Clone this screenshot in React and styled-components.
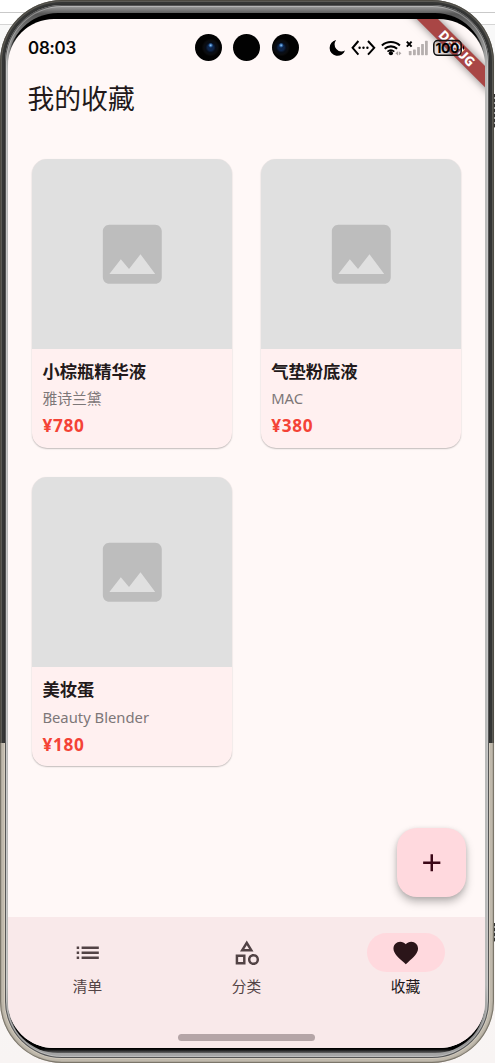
import React from "react";
import styled, { createGlobalStyle, css } from "styled-components";
import { MdAdd, MdFavorite, MdImage, MdList, MdOutlineCategory } from "react-icons/md";

const products = [
  { id: 1, name: "小棕瓶精华液", brand: "雅诗兰黛", price: 780 },
  { id: 2, name: "气垫粉底液", brand: "MAC", price: 380 },
  { id: 3, name: "美妆蛋", brand: "Beauty Blender", price: 180 },
];

const tabs = [
  { label: "清单", icon: MdList },
  { label: "分类", icon: MdOutlineCategory },
  { label: "收藏", icon: MdFavorite, active: true },
];

const StatusIcons = () => {
  return (
    <StatusSvg width="140" height="20" viewBox="0 0 140 20">
      {/* do not disturb */}
      <path d="M7.2 2.1A7.9 7.9 0 1 0 16 12.4 6.9 6.9 0 0 1 7.2 2.1z" fill="#000" />
      {/* usb debugging */}
      <g fill="none" stroke="#000" strokeWidth="2">
        <path d="M29.4 3 23.6 9.8l5.8 6.8M39 3l6.2 6.8-6.2 6.8" />
      </g>
      <g fill="#000">
        <circle cx="30.6" cy="9.8" r="1.2" />
        <circle cx="34.5" cy="9.8" r="1.2" />
        <circle cx="38.4" cy="9.8" r="1.2" />
      </g>
      {/* wifi */}
      <g fill="none" stroke="#000" strokeWidth="2.1">
        <path d="M52.9 7.5a13.4 13.4 0 0 1 18 0" />
        <path d="M55.7 10.8a9.2 9.2 0 0 1 12.4 0" />
        <path d="M58.5 13.6a5.2 5.2 0 0 1 6.8 0" strokeWidth="1.7" />
      </g>
      <circle cx="61.9" cy="15.2" r="2.1" fill="#000" />
      <path d="m69 13.2-2.6 2.1 2.6 2.1zM69.8 13.2l2.6 2.1-2.6 2.1z" fill="#aaa3a2" />
      {/* signal */}
      <path d="m77.8 3.6 4.8 5M82.6 3.6l-4.8 5" stroke="#000" strokeWidth="2" />
      <g fill="#b6afae">
        <rect x="79.8" y="13" width="2.8" height="4.2" rx="0.6" />
        <rect x="84" y="11.5" width="2.8" height="5.7" rx="0.6" />
        <rect x="88.1" y="9" width="2.8" height="8.2" rx="0.6" />
        <rect x="92.1" y="6" width="2.8" height="11.2" rx="0.6" />
        <rect x="96" y="2.8" width="2.8" height="14.4" rx="0.6" />
      </g>
      {/* battery */}
      <rect x="104.8" y="2.5" width="27.4" height="14.8" rx="4" fill="rgba(60, 40, 40, 0.12)" stroke="#111" strokeWidth="1.5" />
      <path d="M134 7.4q2.4 2.4 0 4.8z" fill="#000" />
      <text x="118.4" y="14.8" textAnchor="middle" fontSize="13.8" fontWeight="700" fontFamily="Inter, sans-serif" textLength="24">
        100
      </text>
    </StatusSvg>
  );
};

const ProductCard = ({ name, brand, price }) => {
  return (
    <Card>
      <Thumb>
        <MdImage />
      </Thumb>
      <CardBody>
        <h3>{name}</h3>
        <Brand>{brand}</Brand>
        <Price>¥{price}</Price>
      </CardBody>
    </Card>
  );
};

const App = () => {
  return (
    <>
      <GlobalStyle />
      <Desktop>
        <Speck $top={94} $height={34} />
        <Speck $top={923} $height={19} />
        <Shell>
          <Bevel>
            <Bezel>
              <Screen>
                <DebugBanner>DEBUG</DebugBanner>
                <StatusBar>
                  <Clock>08:03</Clock>
                  <Cameras>
                    <Lens $glow="58%" />
                    <Lens />
                    <Lens $glow="34%" />
                  </Cameras>
                  <StatusIcons />
                </StatusBar>
                <AppBar>我的收藏</AppBar>
                <Grid>
                  {products.map((product) => (
                    <ProductCard key={product.id} {...product} />
                  ))}
                </Grid>
                <Fab type="button" aria-label="add">
                  <MdAdd />
                </Fab>
                <NavBar>
                  <Tabs>
                    {tabs.map(({ label, icon: Icon, active }) => (
                      <Tab key={label} $active={active}>
                        <Indicator $active={active}>
                          <Icon />
                        </Indicator>
                        {label}
                      </Tab>
                    ))}
                  </Tabs>
                  <HomeHandle />
                </NavBar>
              </Screen>
            </Bezel>
          </Bevel>
        </Shell>
      </Desktop>
    </>
  );
};

const GlobalStyle = createGlobalStyle`
  * {
    box-sizing: border-box;
  }

  body {
    margin: 0;
    overflow: hidden;
    font-family: "Noto Sans", "Noto Sans CJK SC", sans-serif;
  }
`;

const Desktop = styled.div`
  position: relative;
  width: 495px;
  height: 1063px;
  background: linear-gradient(#fff 12px, #c9c9c9 12px 13px, #fff 13px 24px, #d5d5d5 24px 25px, #f8f8f8 25px 700px, #f8f4f3 1063px);
`;

const Speck = styled.i`
  position: absolute;
  right: 0;
  top: ${({ $top }) => $top}px;
  width: 2px;
  height: ${({ $height }) => $height}px;
  background: repeating-linear-gradient(#333 0 3px, #aaa 3px 5px);
`;

const Shell = styled.div`
  position: relative;
  width: 494px;
  height: 1063px;
  padding: 5px;
  border-radius: 62px;
  background: linear-gradient(#303131 743px, #d3cbbd 743px);
  box-shadow: inset 0 0 0 1px rgba(60, 55, 45, 0.45), inset 0 0 0 2px rgba(150, 145, 135, 0.4), inset 0 0 0 4px rgba(90, 88, 80, 0.15);
`;

const Bevel = styled.div`
  height: 100%;
  padding: 8px 4px 5px 3px;
  border-radius: 57px;
  background: linear-gradient(#aaa 0, #555 9px, #777 25px, #b9bab9 65px, #b9bab9 980px, #888 1030px, #aaa 1053px);
  box-shadow: inset 0 0 0 1px #555, inset 0 0 0 2px rgba(220, 220, 220, 0.4);
`;

const Bezel = styled.div`
  height: 100%;
  padding: 6px 0;
  border-radius: 50px;
  background: linear-gradient(#000 22px, #b9bab9 48px, #b9bab9 994px, #000 1018px, #000 1036px, #666 1040px);
`;

const Screen = styled.div`
  position: relative;
  display: flex;
  flex-direction: column;
  width: 477px;
  height: 1029px;
  border-radius: 46px;
  background: #fff8f7;
  overflow: hidden;
`;

const DebugBanner = styled.div`
  position: absolute;
  top: 21.5px;
  right: -32px;
  width: 120px;
  height: 14.6px;
  line-height: 15px;
  transform: rotate(45deg);
  background: #a94645;
  color: #fff;
  font-size: 13px;
  font-weight: 800;
  text-align: center;
  box-shadow: 0 0 8px rgba(0, 0, 0, 0.5);
`;

const StatusBar = styled.div`
  position: relative;
  display: flex;
  align-items: center;
  height: 57px;
  padding-left: 20px;
`;

const Clock = styled.span`
  width: 167px;
  color: #000;
  font-family: Inter, sans-serif;
  font-size: 17.2px;
  font-weight: 500;
  letter-spacing: -0.2px;
  -webkit-text-stroke: 0.2px #000;
`;

const Cameras = styled.div`
  display: flex;
  gap: 11.3px;
  width: 134px;
`;

const Lens = styled.i`
  width: 27px;
  height: 27px;
  border-radius: 50%;
  background: #020202;

  ${({ $glow }) =>
    $glow &&
    css`
      background: radial-gradient(circle at ${$glow} 42%, #9bd0ff 0, #285d9b 1.5px, transparent 2.5px),
        radial-gradient(circle at ${$glow} 50%, #10264a 0 3px, #070d18 5px, #0c0d0f 7px, #020202 9px);
    `}
`;

const StatusSvg = styled.svg`
  flex: none;
`;

const AppBar = styled.header`
  height: 70px;
  padding-left: 19.5px;
  line-height: 46px;
  color: #22191a;
  font-size: 26.8px;
`;

const Grid = styled.main`
  display: grid;
  grid-template-columns: 199.5px 199.5px;
  gap: 29.4px 29.3px;
  padding: 13px 24.4px 0;
`;

const Card = styled.article`
  height: 289px;
  border-radius: 15px;
  background: #fff0f0;
  box-shadow: 0 1px 1.5px rgba(0, 0, 0, 0.24), 0 0 1px rgba(0, 0, 0, 0.06);
  overflow: hidden;
`;

const Thumb = styled.div`
  display: flex;
  align-items: center;
  justify-content: center;
  height: 190px;
  background: #e0e0e0;
  color: #bdbdbd;

  svg {
    width: 78.6px;
    height: 78.6px;
  }
`;

const CardBody = styled.div`
  padding: 10px 10px 0;

  h3 {
    margin: 0;
    height: 25px;
    line-height: 25px;
    color: #22191a;
    font-size: 17.3px;
    font-weight: 700;
  }
`;

const Brand = styled.p`
  margin: 2.2px 0 0;
  height: 24px;
  line-height: 24px;
  color: #7d7778;
  font-size: 14.8px;
`;

const Price = styled.p`
  margin: 3.3px 0 0;
  height: 25px;
  line-height: 25px;
  color: #f44336;
  font-size: 17.2px;
  font-weight: 700;
  letter-spacing: 0.7px;
`;

const Fab = styled.button`
  position: absolute;
  top: 809px;
  left: 389px;
  display: flex;
  align-items: center;
  justify-content: center;
  width: 69px;
  height: 69px;
  padding: 0;
  border: none;
  border-radius: 20px;
  background: #ffd9de;
  color: #3b0716;
  box-shadow: 0 5px 8px rgba(0, 0, 0, 0.26), 0 1px 4px rgba(0, 0, 0, 0.1);

  svg {
    width: 29.5px;
    height: 29.5px;
  }
`;

const NavBar = styled.nav`
  display: flex;
  flex-direction: column;
  align-items: center;
  justify-content: space-between;
  height: 131px;
  margin-top: auto;
  padding: 16px 0 7px;
  background: #f9e9ea;
`;

const Tabs = styled.div`
  display: flex;
  width: 100%;
`;

const Tab = styled.div`
  display: flex;
  flex: 1;
  flex-direction: column;
  align-items: center;
  gap: 2px;
  line-height: 24px;
  color: ${({ $active }) => ($active ? "#22191a" : "#524345")};
  font-size: 14.7px;
  font-weight: 400;
`;

const Indicator = styled.span`
  display: flex;
  align-items: center;
  justify-content: center;
  width: 78px;
  height: 39px;
  border-radius: 20px;
  background: ${({ $active }) => ($active ? "#ffd9de" : "transparent")};
  color: ${({ $active }) => ($active ? "#2b1519" : "#524345")};

  svg {
    width: 29.5px;
    height: 29.5px;
  }
`;

const HomeHandle = styled.i`
  width: 137px;
  height: 7px;
  border-radius: 4px;
  background: #b5a5a7;
`;

export default App;
